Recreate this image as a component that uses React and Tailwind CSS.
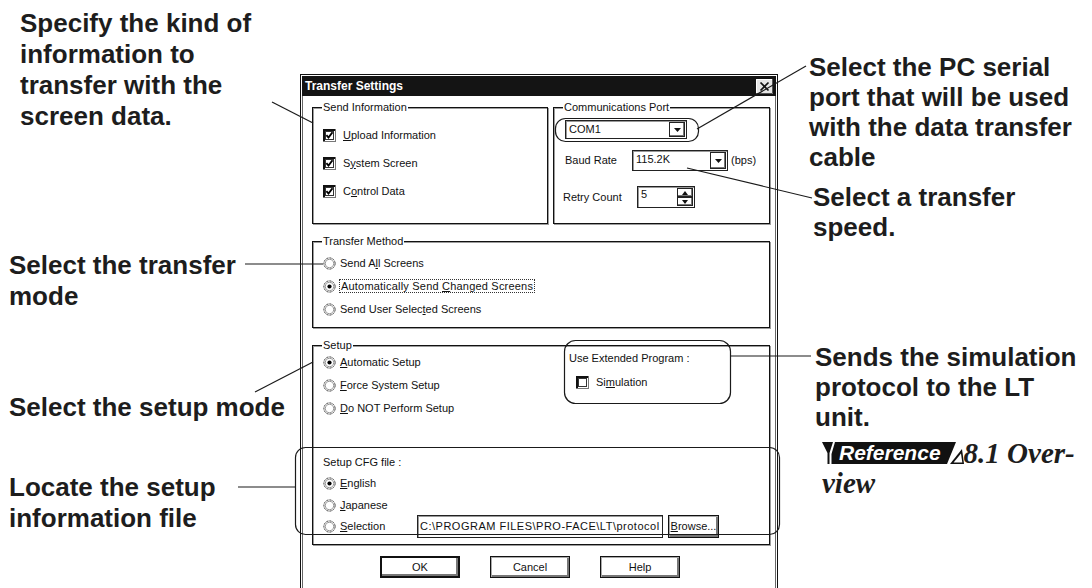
import React from "react";

const Ul = ({ children }) => <span className="underline underline-offset-[1px]">{children}</span>;

const CheckBox = ({ checked }) => (
  <svg width="13" height="13" viewBox="0 0 13 13" className="shrink-0">
    <rect x="0.5" y="0.5" width="12" height="12" fill="#fff" stroke="#777" />
    <path d="M1 12V1h11" stroke="#111" strokeWidth="2" fill="none" />
    <rect x="2.5" y="2.5" width="8" height="8" fill="none" stroke="#333" />
    {checked && <path d="M3.4 6.2l2.1 2.4 4-5.4" stroke="#000" strokeWidth="1.9" fill="none" />}
  </svg>
);

const Radio = ({ on }) => (
  <svg width="13" height="13" viewBox="0 0 13 13" className="shrink-0">
    <circle cx="6.5" cy="6.5" r="5.6" fill="#fff" stroke="#333" strokeDasharray="2.2 1" />
    <circle cx="6.5" cy="6.5" r="4.2" fill="none" stroke="#999" />
    {on && <circle cx="6.5" cy="6.5" r="2.1" fill="#000" />}
  </svg>
);

const ArrowBtn = () => (
  <div className="flex w-[16px] shrink-0 items-center justify-center border border-[#222] bg-white shadow-[inset_-1px_-1px_0_#777]">
    <svg width="7" height="4" viewBox="0 0 7 4">
      <path d="M0 0h7L3.5 4z" fill="#111" />
    </svg>
  </div>
);

const Combo = ({ value, className }) => (
  <div className={`flex border border-[#222] bg-white p-[1px] shadow-[inset_1px_1px_0_#999] ${className}`}>
    <span className="flex-1 pl-[2px] leading-[15px]">{value}</span>
    <ArrowBtn />
  </div>
);

const Spin = ({ value }) => (
  <div className="flex h-[22px] w-[58px] border border-[#222] bg-white p-[1px] shadow-[inset_1px_1px_0_#999]">
    <span className="flex-1 pl-[2px] leading-[13px]">{value}</span>
    <div className="flex w-[16px] flex-col">
      {["M0 4h6L3 0z", "M0 0h6L3 4z"].map((d) => (
        <div
          key={d}
          className="flex flex-1 items-center justify-center border border-[#222] bg-white shadow-[inset_-1px_-1px_0_#777]"
        >
          <svg width="6" height="4" viewBox="0 0 6 4">
            <path d={d} fill="#111" />
          </svg>
        </div>
      ))}
    </div>
  </div>
);

const Group = ({ title, className, children }) => (
  <div className={`border border-[#111] shadow-[inset_1px_1px_0_#9c9c9c,1px_1px_0_#9c9c9c] ${className}`}>
    <div className="-mt-[7px] ml-[9px] w-fit bg-white px-[1px] leading-[13px]">{title}</div>
    {children}
  </div>
);

const CheckRow = ({ children }) => (
  <div className="flex h-[20px] items-center gap-[7px]">
    <CheckBox checked />
    <span>{children}</span>
  </div>
);

const RadioRow = ({ on, children }) => (
  <div className="flex h-[18px] items-center gap-[4px]">
    <Radio on={on} />
    <span>{children}</span>
  </div>
);

const Button = ({ children, primary }) => (
  <div
    className={`flex h-[22px] w-[80px] items-center justify-center bg-white ${
      primary
        ? "border-2 border-[#111] shadow-[inset_-2px_-2px_0_#777]"
        : "border border-[#111] shadow-[inset_1px_1px_0_#aaa,inset_-2px_-2px_0_#777]"
    }`}
  >
    {children}
  </div>
);

function Dialog() {
  return (
    <div className="mt-[74px] h-[600px] w-[478px] shrink-0 border border-[#111] p-[1px] text-[11px] leading-[13px] text-[#111]">
      <div className="flex h-[20px] items-center justify-between bg-[#141414] pl-[3px] pr-[3px]">
        <span className="text-[12px] font-bold text-white">Transfer Settings</span>
        <svg width="17" height="15" viewBox="0 0 17 15">
          <rect width="17" height="15" fill="#e6e6e6" />
          <path d="M0.5 14.5V0.5h16" stroke="#fff" fill="none" />
          <path d="M16.5 0v14.5H0" stroke="#555" fill="none" />
          <path d="M4.5 3.5l8 8M12.5 3.5l-8 8" stroke="#111" strokeWidth="1.7" />
        </svg>
      </div>

      <div className="h-full border-x border-[#666] pl-[9px] pr-[5px] pt-[11px]">
        <div className="flex gap-[5px]">
          <Group title="Send Information" className="h-[117px] w-[236px]">
            <div className="ml-[10px] mt-[11px] flex flex-col gap-[8px]">
              <CheckRow>
                <Ul>U</Ul>pload Information
              </CheckRow>
              <CheckRow>
                S<Ul>y</Ul>stem Screen
              </CheckRow>
              <CheckRow>
                C<Ul>o</Ul>ntrol Data
              </CheckRow>
            </div>
          </Group>

          <Group title="Communications Port" className="h-[117px] w-[217px]">
            <div className="ml-[11px]">
              <Combo value="COM1" className="mt-[6px] h-[19px] w-[122px]" />
              <div className="mt-[11px] flex h-[21px] items-center">
                <span className="w-[67px]">Baud Rate</span>
                <Combo value="115.2K" className="h-[21px] w-[96px]" />
                <span className="ml-[3px]">(bps)</span>
              </div>
              <div className="mt-[15px] flex h-[22px] items-center">
                <span className="-ml-[2px] w-[74px]">Retry Count</span>
                <Spin value="5" />
              </div>
            </div>
          </Group>
        </div>

        <Group title="Transfer Method" className="mt-[17px] h-[87px]">
          <div className="ml-[10px] mt-[6px] flex flex-col gap-[5px]">
            <RadioRow>
              Send A<Ul>l</Ul>l Screens
            </RadioRow>
            <RadioRow on>
              <span className="-ml-[1px] border border-dotted border-[#333] px-[1px] tracking-[0.2px]">
                Automatically Send <Ul>C</Ul>hanged Screens
              </span>
            </RadioRow>
            <RadioRow>
              Send User Selec<Ul>t</Ul>ed Screens
            </RadioRow>
          </div>
        </Group>

        <Group title="Setup" className="mt-[17px] h-[200px]">
          <div className="flex">
            <div className="ml-[10px] mt-[1px] flex w-[246px] flex-col gap-[5px]">
              <RadioRow on>
                <Ul>A</Ul>utomatic Setup
              </RadioRow>
              <RadioRow>
                <Ul>F</Ul>orce System Setup
              </RadioRow>
              <RadioRow>
                <Ul>D</Ul>o NOT Perform Setup
              </RadioRow>
            </div>
            <div>
              <div className="leading-[13px]">Use Extended Program :</div>
              <div className="ml-[7px] mt-[9px] flex h-[16px] items-center gap-[7px]">
                <CheckBox />
                <span>
                  Si<Ul>m</Ul>ulation
                </span>
              </div>
            </div>
          </div>

          <div className="ml-[10px]">
            <div className="mt-[39px] leading-[13px]">Setup CFG file :</div>
            <div className="mt-[5px] flex flex-col gap-[4px]">
              <RadioRow on>
                <Ul>E</Ul>nglish
              </RadioRow>
              <RadioRow>
                <Ul>J</Ul>apanese
              </RadioRow>
            </div>
            <div className="mt-[1px] flex h-[23px] items-center">
              <div className="w-[94px]">
                <RadioRow>
                  <Ul>S</Ul>election
                </RadioRow>
              </div>
              <div className="h-[23px] w-[246px] overflow-hidden whitespace-nowrap border border-[#222] bg-white pl-[2px] leading-[20px] tracking-[0.5px] shadow-[inset_1px_1px_0_#999]">
                C:\PROGRAM FILES\PRO-FACE\LT\protocol
              </div>
              <div className="ml-[5px] flex h-[23px] w-[51px] items-center justify-center border border-[#111] bg-white shadow-[inset_1px_1px_0_#aaa,inset_-2px_-2px_0_#777]">
                <span>
                  <Ul>B</Ul>rowse...
                </span>
              </div>
            </div>
          </div>
        </Group>

        <div className="ml-[68px] mt-[11px] flex gap-[30px]">
          <Button primary>OK</Button>
          <Button>Cancel</Button>
          <Button>Help</Button>
        </div>
      </div>
    </div>
  );
}

function LeftNotes() {
  return (
    <div className="w-[300px] shrink-0 whitespace-nowrap text-[26px] font-bold leading-[31px]">
      <p className="ml-[20px] mt-[8px]">
        Specify the kind of
        <br />
        information to
        <br />
        transfer with the
        <br />
        screen data.
      </p>
      <p className="ml-[9px] mt-[118px]">
        Select the transfer
        <br />
        mode
      </p>
      <p className="ml-[9px] mt-[80px]">Select the setup mode</p>
      <p className="ml-[9px] mt-[49px]">
        Locate the setup
        <br />
        information file
      </p>
    </div>
  );
}

function RefBadge() {
  return (
    <div className="flex h-[22px] items-stretch">
      <svg width="17" height="22" viewBox="0 0 17 22">
        <path d="M0 0h11L7.5 11v11h-2V11z" fill="#111" />
        <path d="M13 0h4v22H9.5V12z" fill="#111" />
      </svg>
      <span className="bg-[#111] pr-[1px] text-[21px] font-bold italic leading-[22px] text-white">Reference</span>
      <svg width="22" height="22" viewBox="0 0 22 22">
        <path d="M0 0h14L5 22H0z" fill="#111" />
        <path d="M8 22L20 7l2 15z" fill="#111" />
        <path d="M11.6 20.6L19 11.6l1.3 9z" fill="#fff" />
      </svg>
    </div>
  );
}

function RightNotes() {
  return (
    <div className="flex-1 whitespace-nowrap text-[26px] font-bold leading-[30px]">
      <p className="ml-[31px] mt-[52px]">
        Select the PC serial
        <br />
        port that will be used
        <br />
        with the data transfer
        <br />
        cable
      </p>
      <p className="ml-[35px] mt-[10px]">
        Select a transfer
        <br />
        speed.
      </p>
      <p className="ml-[37px] mt-[100px]">
        Sends the simulation
        <br />
        protocol to the LT
        <br />
        unit.
      </p>
      <div className="ml-[44px] mt-[6px] flex h-[30px] items-center">
        <RefBadge />
        <span className="font-['Liberation_Serif',serif] text-[29px] italic">8.1 Over-</span>
      </div>
      <p className="ml-[44px] font-['Liberation_Serif',serif] text-[29px] italic">view</p>
    </div>
  );
}

function Leaders() {
  const lines = [
    [272, 102, 313, 123],
    [697, 129, 806, 66],
    [687, 168, 812, 198],
    [245, 264, 323, 264],
    [255, 392, 313, 362],
    [238, 487, 295, 487],
    [730, 356, 811, 356],
  ];
  return (
    <svg className="pointer-events-none absolute inset-0" width="1092" height="588" viewBox="0 0 1092 588">
      <g stroke="#1a1a1a" strokeWidth="1.2" fill="none">
        {lines.map(([x1, y1, x2, y2], i) => (
          <line key={i} x1={x1} y1={y1} x2={x2} y2={y2} />
        ))}
        <rect x="555.5" y="118.5" width="143" height="23" rx="10" />
        <rect x="564.5" y="340.5" width="166" height="63" rx="11" />
        <rect x="295.5" y="447.5" width="484" height="87" rx="10" />
      </g>
    </svg>
  );
}

export default function App() {
  return (
    <div className="relative flex h-[588px] w-[1092px] overflow-hidden bg-white font-['Liberation_Sans',Arial,sans-serif] text-[#1d1d1d]">
      <LeftNotes />
      <Dialog />
      <RightNotes />
      <Leaders />
    </div>
  );
}
